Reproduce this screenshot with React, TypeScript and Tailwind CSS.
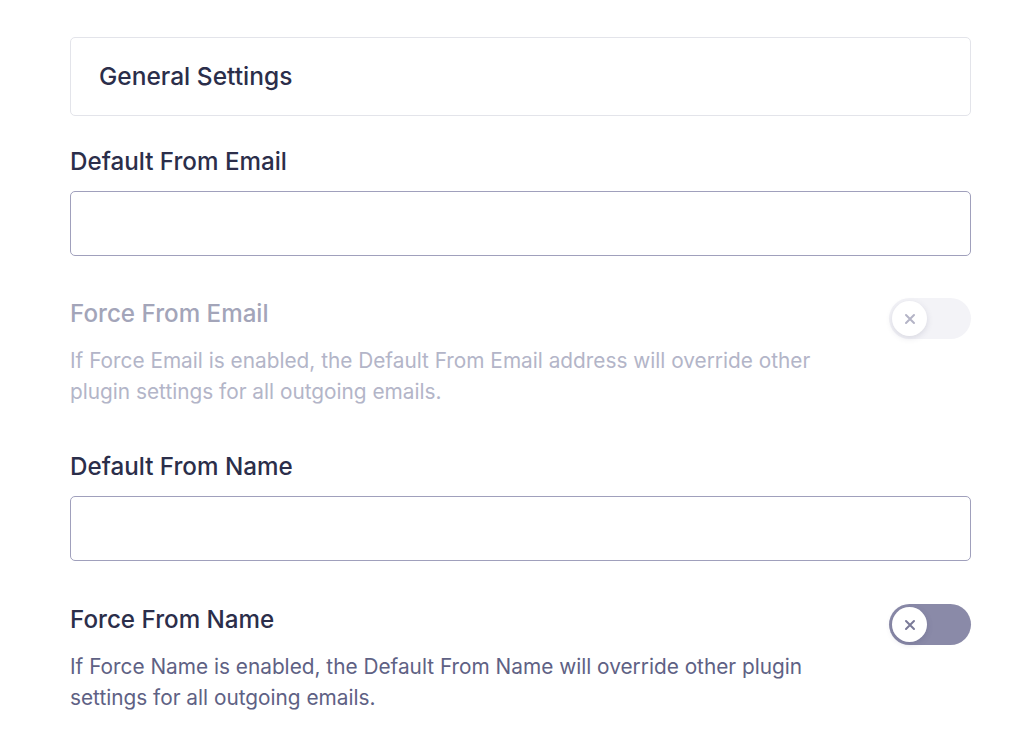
import { useState } from "react";

function XIcon() {
  return (
    <svg width="14" height="14" viewBox="0 0 14 14" fill="none">
      <path d="M3 3l8 8M11 3l-8 8" stroke="currentColor" strokeWidth="2" strokeLinecap="round" />
    </svg>
  );
}

function Toggle({ disabled, onClick }: { disabled?: boolean; onClick?: () => void }) {
  return (
    <button
      type="button"
      onClick={onClick}
      className={
        disabled
          ? "relative -mt-px h-[41px] w-[82px] shrink-0 rounded-full bg-[#f3f3f7]"
          : "relative -mt-px h-[41px] w-[82px] shrink-0 rounded-full bg-[#8a8aa8]"
      }
    >
      <span
        className={
          disabled
            ? "absolute left-[3px] top-[3px] flex h-[35px] w-[35px] items-center justify-center rounded-full bg-white text-[#b4b4c6] shadow-[0_2px_6px_rgba(60,60,100,0.15)]"
            : "absolute left-[3px] top-[3px] flex h-[35px] w-[35px] items-center justify-center rounded-full bg-white text-[#7a7a98] shadow-[0_2px_6px_rgba(60,60,100,0.2)]"
        }
      >
        <XIcon />
      </span>
    </button>
  );
}

function TextField({ label }: { label: string }) {
  const [value, setValue] = useState("");
  return (
    <div>
      <label className="block text-[24.2px] font-medium leading-[30px] text-[#2b2e4a]">{label}</label>
      <input
        value={value}
        onChange={(e) => setValue(e.target.value)}
        className="mt-[14px] block h-[65px] w-full rounded-[5px] border border-[#a0a0bc] bg-white px-4 text-[20px] text-[#2b2e4a] focus:outline-none"
      />
    </div>
  );
}

function ForceRow({ label, help, disabled }: { label: string; help: string; disabled?: boolean }) {
  return (
    <div>
      <div className="flex items-start justify-between">
        <span
          className={
            disabled
              ? "text-[24.2px] font-medium leading-[30px] text-[#a3a5b9]"
              : "text-[24.2px] font-medium leading-[30px] text-[#2b2e4a]"
          }
        >
          {label}
        </span>
        <Toggle disabled={disabled} />
      </div>
      <p
        className={
          disabled
            ? "mt-[6px] max-w-[770px] text-[20.8px] leading-[31px] text-[#b3b5c8]"
            : "mt-[6px] max-w-[770px] text-[20.8px] leading-[31px] text-[#5e6184]"
        }
      >
        {help}
      </p>
    </div>
  );
}

export default function App() {
  return (
    <div className="min-h-screen bg-white font-['Inter',sans-serif]">
      <div className="ml-[70px] w-[901px] pt-[37px]">
        <div className="flex h-[79px] items-center rounded-[5px] border border-[#e3e4ea] px-[28px]">
          <h2 className="text-[24.5px] font-medium text-[#2b2e4a]">General Settings</h2>
        </div>
        <div className="mt-[31px]">
          <TextField label="Default From Email" />
        </div>
        <div className="mt-[43px]">
          <ForceRow
            label="Force From Email"
            disabled
            help="If Force Email is enabled, the Default From Email address will override other plugin settings for all outgoing emails."
          />
        </div>
        <div className="mt-[45px]">
          <TextField label="Default From Name" />
        </div>
        <div className="mt-[44px]">
          <ForceRow
            label="Force From Name"
            help="If Force Name is enabled, the Default From Name will override other plugin settings for all outgoing emails."
          />
        </div>
      </div>
    </div>
  );
}
